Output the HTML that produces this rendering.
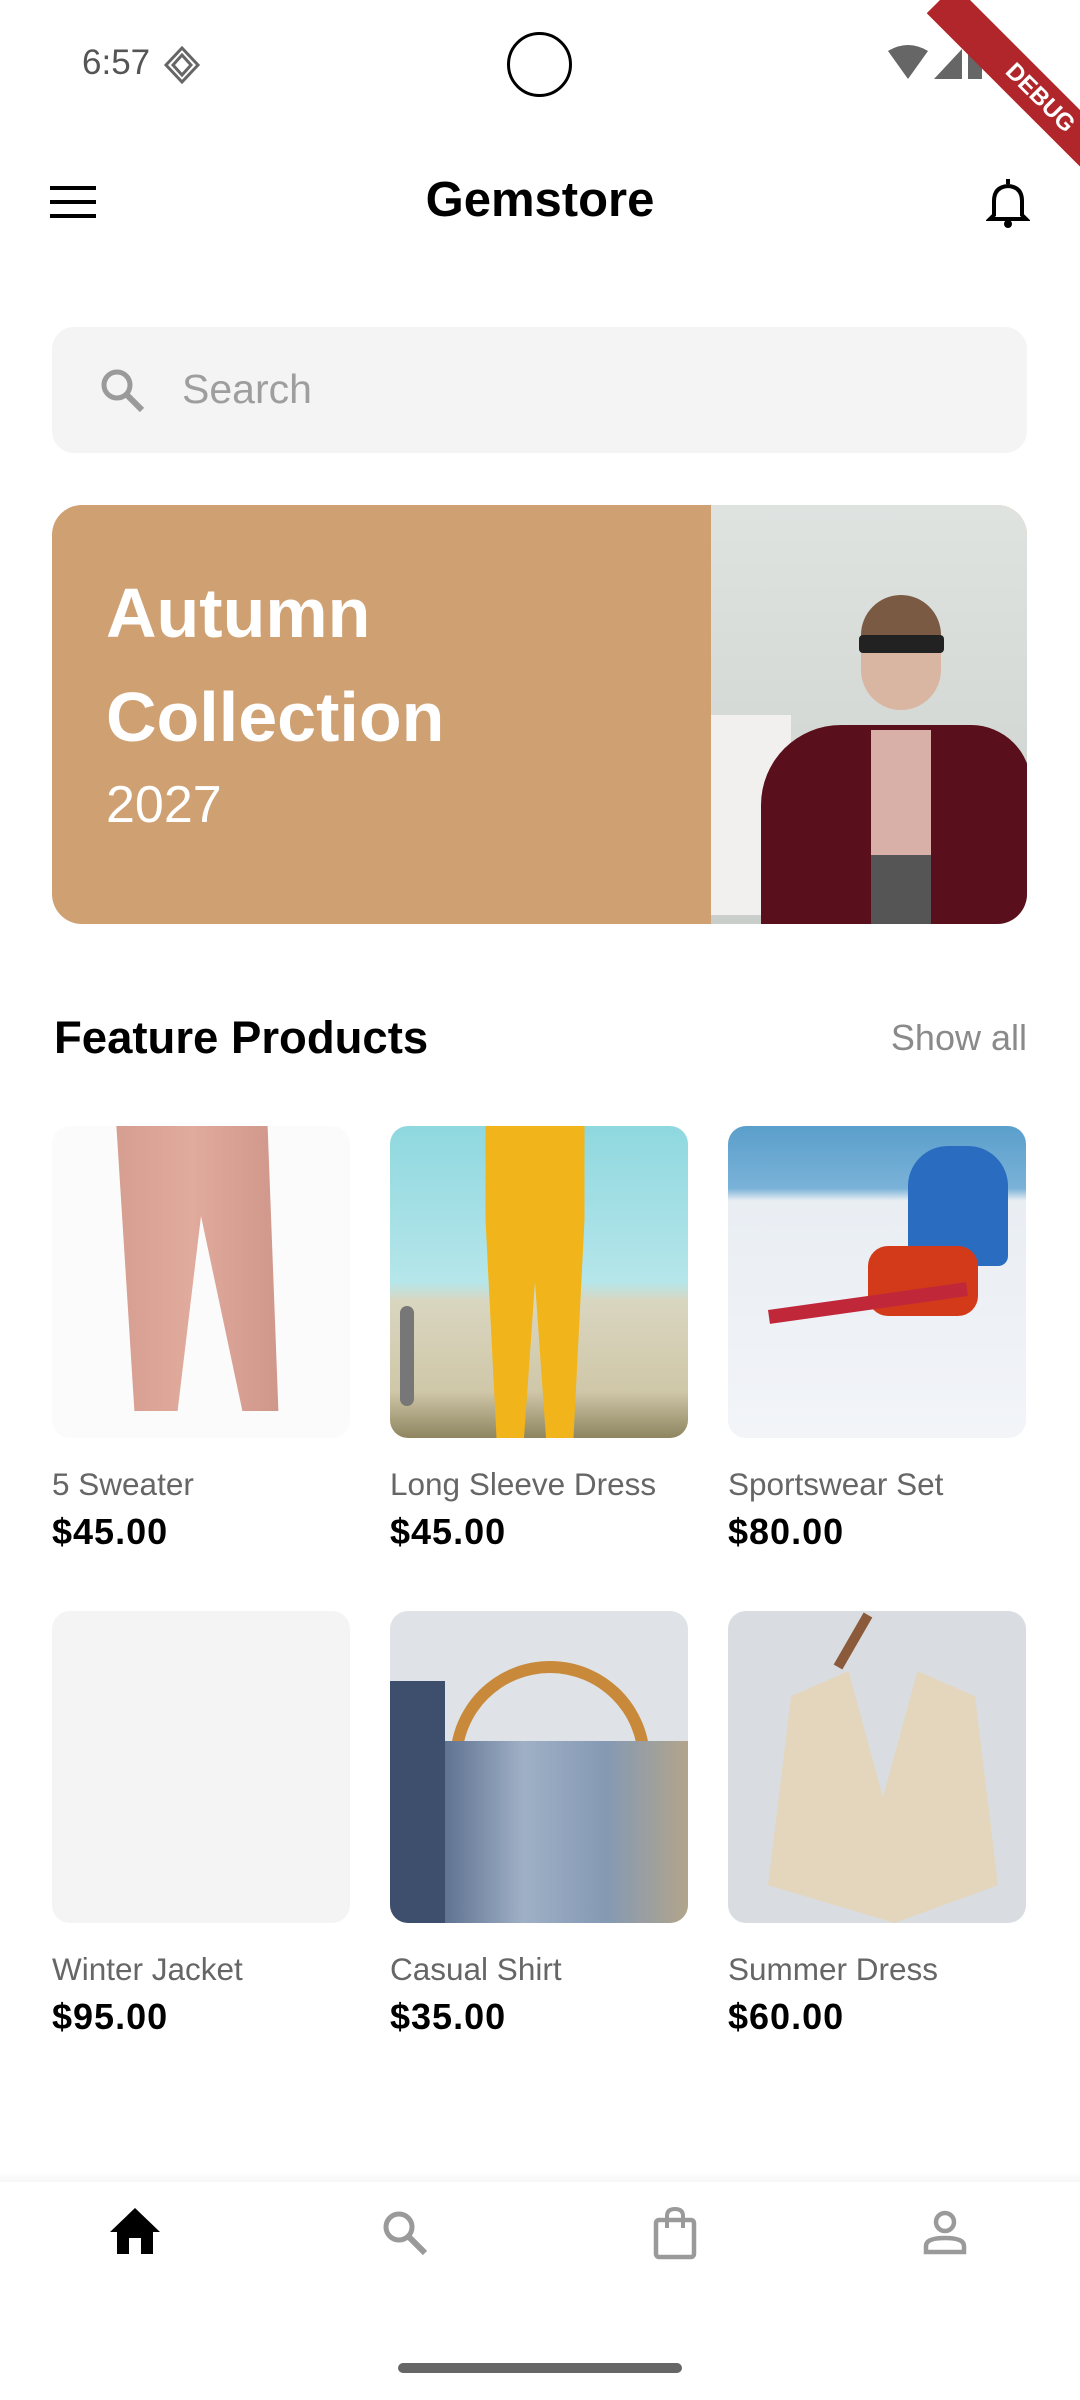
<!DOCTYPE html>
<html><head><meta charset="utf-8"><style>
*{margin:0;padding:0;box-sizing:border-box}
body{width:1080px;height:2400px;background:#fff;position:relative;overflow:hidden;font-family:"Liberation Sans",sans-serif}
.a{position:absolute}
.img{position:absolute;width:298px;height:312px;border-radius:18px;overflow:hidden}
.name{position:absolute;font-size:31.5px;color:#666;white-space:nowrap}
.price{position:absolute;font-size:36px;font-weight:bold;color:#000;letter-spacing:1px}
</style></head><body>
<!-- status bar -->
<div class="a" style="left:82px;top:43px;font-size:35px;color:#555">6:57</div>
<svg class="a" style="left:163px;top:46px" width="38" height="38" viewBox="0 0 38 38"><path d="M19 2 L35 19 L19 36 L3 19Z M19 9 L28 19 L19 29 L10 19Z" fill="none" stroke="#666" stroke-width="3"/></svg>
<div class="a" style="left:507px;top:32px;width:65px;height:65px;border:3px solid #000;border-radius:50%"></div>
<svg class="a" style="left:888px;top:45px" width="100" height="36" viewBox="0 0 100 36"><path d="M0 6 Q20 -6 40 6 L20 34Z" fill="#666"/><path d="M46 34 L74 4 L74 34Z" fill="#666"/><rect x="80" y="6" width="14" height="28" fill="#666"/></svg>
<div class="a" style="width:280px;height:40px;background:#b0262a;transform:rotate(45deg);transform-origin:0 0;color:#fff;font-weight:bold;font-size:24px;text-align:center;line-height:40px;left:955px;top:-15px">DEBUG</div>
<!-- app bar -->
<svg class="a" style="left:50px;top:186px" width="46" height="32"><rect y="0" width="46" height="4" fill="#000"/><rect y="14" width="46" height="4" fill="#000"/><rect y="28" width="46" height="4" fill="#000"/></svg>
<div class="a" style="left:0;width:1080px;top:172px;text-align:center;font-size:49px;font-weight:bold">Gemstore</div>
<svg class="a" style="left:986px;top:175px" width="44" height="54" viewBox="0 0 44 54"><path d="M22 4 v5 M8 40 V26 Q8 12 22 11 Q36 12 36 26 V40 L40 44 H4Z" fill="none" stroke="#000" stroke-width="4"/><circle cx="22" cy="49" r="4" fill="#000"/></svg>
<!-- search -->
<div class="a" style="left:52px;top:327px;width:975px;height:126px;background:#f4f4f4;border-radius:22px"></div>
<svg class="a" style="left:98px;top:366px" width="50" height="50" viewBox="0 0 50 50"><circle cx="19" cy="19" r="13" fill="none" stroke="#9a9a9a" stroke-width="5"/><path d="M28 28 L44 44" stroke="#9a9a9a" stroke-width="6"/></svg>
<div class="a" style="left:182px;top:366px;font-size:41px;color:#9e9e9e">Search</div>
<!-- banner -->
<div class="a" style="left:52px;top:505px;width:975px;height:419px;border-radius:30px;overflow:hidden;background:#cfa072">
  <div class="a" style="left:659px;top:0;width:316px;height:419px;background:linear-gradient(180deg,#dfe3e0 0%,#d3d8d5 60%,#c9cecb 100%)">
    <div class="a" style="left:0;top:210px;width:80px;height:200px;background:#f2f0ee"></div>
    <div class="a" style="left:50px;top:220px;width:270px;height:200px;background:#5a0f1c;border-radius:80px 60px 0 0"></div>
    <div class="a" style="left:160px;top:225px;width:60px;height:160px;background:#d8b0a8"></div>
    <div class="a" style="left:160px;top:350px;width:60px;height:70px;background:#555"></div>
    <div class="a" style="left:150px;top:95px;width:80px;height:110px;background:#d9b6a2;border-radius:40px 40px 45px 45px"></div>
    <div class="a" style="left:150px;top:90px;width:80px;height:50px;background:#7b5a44;border-radius:40px 40px 0 0"></div>
    <div class="a" style="left:148px;top:130px;width:85px;height:18px;background:#222;border-radius:4px"></div>
  </div>
  <div class="a" style="left:54px;top:56px;font-size:70px;font-weight:bold;color:#fff;line-height:104px">Autumn<br>Collection</div>
  <div class="a" style="left:54px;top:270px;font-size:52px;color:#fff">2027</div>
</div>
<!-- section header -->
<div class="a" style="left:54px;top:1012px;font-size:45.5px;font-weight:bold">Feature Products</div>
<div class="a" style="right:53px;top:1017px;font-size:36px;color:#8a8a8a">Show all</div>
<!-- row 1 -->
<div class="img" style="left:52px;top:1126px;background:#fbfbfb">
  <div class="a" style="left:50px;top:0;width:180px;height:300px;background:linear-gradient(90deg,#d49c8e,#e0aa9c,#cf968a);clip-path:polygon(8% 0,92% 0,98% 95%,78% 95%,55% 30%,42% 95%,18% 95%)"></div>
</div>
<div class="img" style="left:390px;top:1126px;background:linear-gradient(180deg,#8fd8df 0%,#b5e6ea 50%,#d9d6c0 56%,#cfc7a8 85%,#8e8560 100%)">
  <div class="a" style="left:90px;top:0;width:110px;height:312px;background:#f1b41a;clip-path:polygon(5% 0,95% 0,95% 30%,85% 100%,60% 100%,50% 50%,40% 100%,15% 100%,5% 30%)"></div>
  <div class="a" style="left:10px;top:180px;width:14px;height:100px;background:#777;border-radius:7px"></div>
</div>
<div class="img" style="left:728px;top:1126px;background:linear-gradient(180deg,#5a9fcb 0%,#7ab2d8 20%,#e9eef3 24%,#f2f4f8 100%)">
  <div class="a" style="left:180px;top:20px;width:100px;height:120px;background:#2a6cc0;border-radius:40px 40px 10px 10px"></div>
  <div class="a" style="left:140px;top:120px;width:110px;height:70px;background:#d33a1a;border-radius:20px"></div>
  <div class="a" style="left:40px;top:170px;width:200px;height:14px;background:#c0283a;transform:rotate(-8deg)"></div>
</div>
<div class="name" style="left:52px;top:1466px">5 Sweater</div>
<div class="name" style="left:390px;top:1466px">Long Sleeve Dress</div>
<div class="name" style="left:728px;top:1466px">Sportswear Set</div>
<div class="price" style="left:52px;top:1511px">$45.00</div>
<div class="price" style="left:390px;top:1511px">$45.00</div>
<div class="price" style="left:728px;top:1511px">$80.00</div>
<!-- row 2 -->
<div class="img" style="left:52px;top:1611px;background:#f4f4f4"></div>
<div class="img" style="left:390px;top:1611px;background:#dfe2e6">
  <div class="a" style="left:60px;top:50px;width:200px;height:120px;border:12px solid #c88a3a;border-bottom:none;border-radius:100px 100px 0 0"></div>
  <div class="a" style="left:50px;top:130px;width:250px;height:182px;background:linear-gradient(90deg,#5c6f8e,#9fb0c6,#8599b4,#b3a58a)"></div>
  <div class="a" style="left:0;top:70px;width:55px;height:242px;background:#3e4f6e"></div>
</div>
<div class="img" style="left:728px;top:1611px;background:#d9dde1">
  <div class="a" style="left:40px;top:60px;width:230px;height:252px;background:#e3d6bd;clip-path:polygon(10% 10%,35% 0,50% 50%,65% 0,90% 10%,100% 85%,55% 100%,0 85%)"></div>
  <div class="a" style="left:120px;top:0;width:10px;height:60px;background:#8b5a3a;transform:rotate(30deg)"></div>
</div>
<div class="name" style="left:52px;top:1951px">Winter Jacket</div>
<div class="name" style="left:390px;top:1951px">Casual Shirt</div>
<div class="name" style="left:728px;top:1951px">Summer Dress</div>
<div class="price" style="left:52px;top:1996px">$95.00</div>
<div class="price" style="left:390px;top:1996px">$35.00</div>
<div class="price" style="left:728px;top:1996px">$60.00</div>
<!-- bottom nav -->
<div class="a" style="left:0;top:2172px;width:1080px;height:10px;background:linear-gradient(#fff,#f7f7f7)"></div>
<svg class="a" style="left:108px;top:2206px" width="54" height="50" viewBox="0 0 54 50"><path d="M27 2 L52 26 H45 V48 H33 V32 H21 V48 H9 V26 H2Z" fill="#000"/></svg>
<svg class="a" style="left:380px;top:2208px" width="50" height="50" viewBox="0 0 50 50"><circle cx="19" cy="19" r="13" fill="none" stroke="#9a9a9a" stroke-width="5"/><path d="M28 28 L45 45" stroke="#9a9a9a" stroke-width="6"/></svg>
<svg class="a" style="left:652px;top:2206px" width="46" height="54" viewBox="0 0 46 54"><rect x="4" y="14" width="38" height="37" rx="3" fill="none" stroke="#9a9a9a" stroke-width="4.5"/><path d="M15 22 V10 Q15 3 23 3 Q31 3 31 10 V22" fill="none" stroke="#9a9a9a" stroke-width="4"/></svg>
<svg class="a" style="left:920px;top:2208px" width="50" height="50" viewBox="0 0 50 50"><circle cx="25" cy="14" r="9" fill="none" stroke="#9a9a9a" stroke-width="4.5"/><path d="M6 44 V38 Q6 30 25 30 Q44 30 44 38 V44Z" fill="none" stroke="#9a9a9a" stroke-width="4.5"/></svg>
<div class="a" style="left:398px;top:2363px;width:284px;height:10px;border-radius:5px;background:#666"></div>
</body></html>
